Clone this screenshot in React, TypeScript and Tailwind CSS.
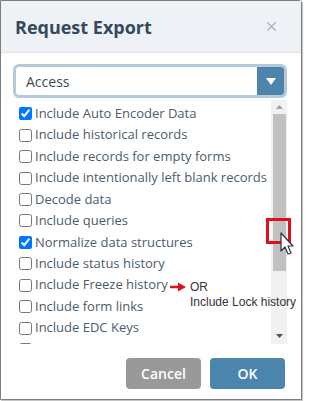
import { X } from "lucide-react";

const options = [
  { label: "Include Auto Encoder Data", checked: true },
  { label: "Include historical records", checked: false },
  { label: "Include records for empty forms", checked: false },
  { label: "Include intentionally left blank records", checked: false },
  { label: "Decode data", checked: false },
  { label: "Include queries", checked: false },
  { label: "Normalize data structures", checked: true },
  { label: "Include status history", checked: false },
  { label: "Include Freeze history", checked: false },
  { label: "Include form links", checked: false },
  { label: "Include EDC Keys", checked: false },
];

export default function App() {
  return (
    <div className="w-[309px] h-[401px] bg-white" style={{ fontFamily: '"Open Sans", sans-serif' }}>
      <div className="relative w-[302px] h-[400px] border border-[#7d7d7d] rounded-tr-[3px] bg-white flex flex-col shadow-[1px_1px_1px_rgba(0,0,0,0.25)]">
        {/* header */}
        <div className="h-[52px] bg-[#eef1f5] border-b border-[#dfe3e8] flex items-center justify-between pl-[14px] pr-[22px] shrink-0">
          <h2 className="text-[18px] font-bold text-[#34495e] leading-none">Request Export</h2>
          <X className="w-[15px] h-[15px] text-[#a7bccc]" strokeWidth={2.5} />
        </div>

        {/* body */}
        <div className="px-[12px] pt-[11px] flex-1 flex flex-col">
          <div className="h-[34px] w-[274px] border-[3px] border-[#b3cadc] rounded-[6px] flex items-stretch overflow-hidden">
            <div className="flex-1 flex items-center pl-[10px] text-[14px] text-[#3c4a58]">Access</div>
            <div className="w-[27px] bg-[#4d84ab] flex items-center justify-center">
              <svg width="10" height="7" viewBox="0 0 10 7">
                <path d="M0 0 L10 0 L5 7 Z" fill="#ffffff" />
              </svg>
            </div>
          </div>

          <div className="flex h-[244px] mt-[2px]">
            <div className="flex-1 overflow-hidden pl-[6px] pt-[3px]">
              {options.map((o) => (
                <label key={o.label} className="flex items-center h-[21.45px] text-[13px] text-[#4b5c6d] whitespace-nowrap">
                  <input
                    type="checkbox"
                    defaultChecked={o.checked}
                    className="w-[13px] h-[13px] m-0 mr-[3px] accent-[#0075ff]"
                  />
                  <span>{o.label}</span>
                </label>
              ))}
              <div className="flex items-center h-[21px]">
                <input type="checkbox" className="w-[13px] h-[13px] m-0" />
              </div>
            </div>
            <div className="w-[16px] bg-[#f1f1f1] flex flex-col items-center mr-[2px]">
              <div className="h-[14px] flex items-center justify-center">
                <svg width="7" height="4" viewBox="0 0 7 4"><path d="M0 4 L7 4 L3.5 0 Z" fill="#a3a3a3" /></svg>
              </div>
              <div className="w-[13px] h-[157px] bg-[#c1c1c1]" />
              <div className="flex-1" />
              <div className="h-[16px] flex items-center justify-center">
                <svg width="7" height="4" viewBox="0 0 7 4"><path d="M0 0 L7 0 L3.5 4 Z" fill="#505050" /></svg>
              </div>
            </div>
          </div>
        </div>

        {/* footer */}
        <div className="flex justify-end gap-[9px] pr-[16px] pb-[10px]">
          <button className="w-[75px] h-[31px] rounded-[4px] bg-[#999999] text-white text-[14px] font-semibold">Cancel</button>
          <button className="w-[75px] h-[31px] rounded-[4px] bg-[#4b84ad] text-white text-[14px] font-semibold">OK</button>
        </div>

        {/* annotations */}
        <div className="absolute left-[265px] top-[217px] w-[25px] h-[26px] border-[3px] border-[#e0101a]" />
        <svg className="absolute left-[279px] top-[231px]" width="16" height="26" viewBox="0 0 16 26">
          <path d="M1 1 L1 19 L5 15 L8 22 L11 21 L8 14 L13 14 Z" fill="#ffffff" stroke="#333" strokeWidth="1.2" strokeLinejoin="round" />
        </svg>
        <svg className="absolute left-[169px] top-[281px]" width="17" height="10" viewBox="0 0 17 10">
          <path d="M0 5 L10 5" stroke="#e0101a" strokeWidth="2.5" />
          <path d="M8 0.5 L16 5 L8 9.5 Z" fill="#e0101a" />
        </svg>
        <div className="absolute left-[189px] top-[279px] text-[12px] leading-[15px] text-[#333333]" style={{ fontFamily: '"Liberation Sans", Arial, sans-serif' }}>
          <div>OR</div>
          <div>Include Lock history</div>
        </div>
      </div>
    </div>
  );
}
